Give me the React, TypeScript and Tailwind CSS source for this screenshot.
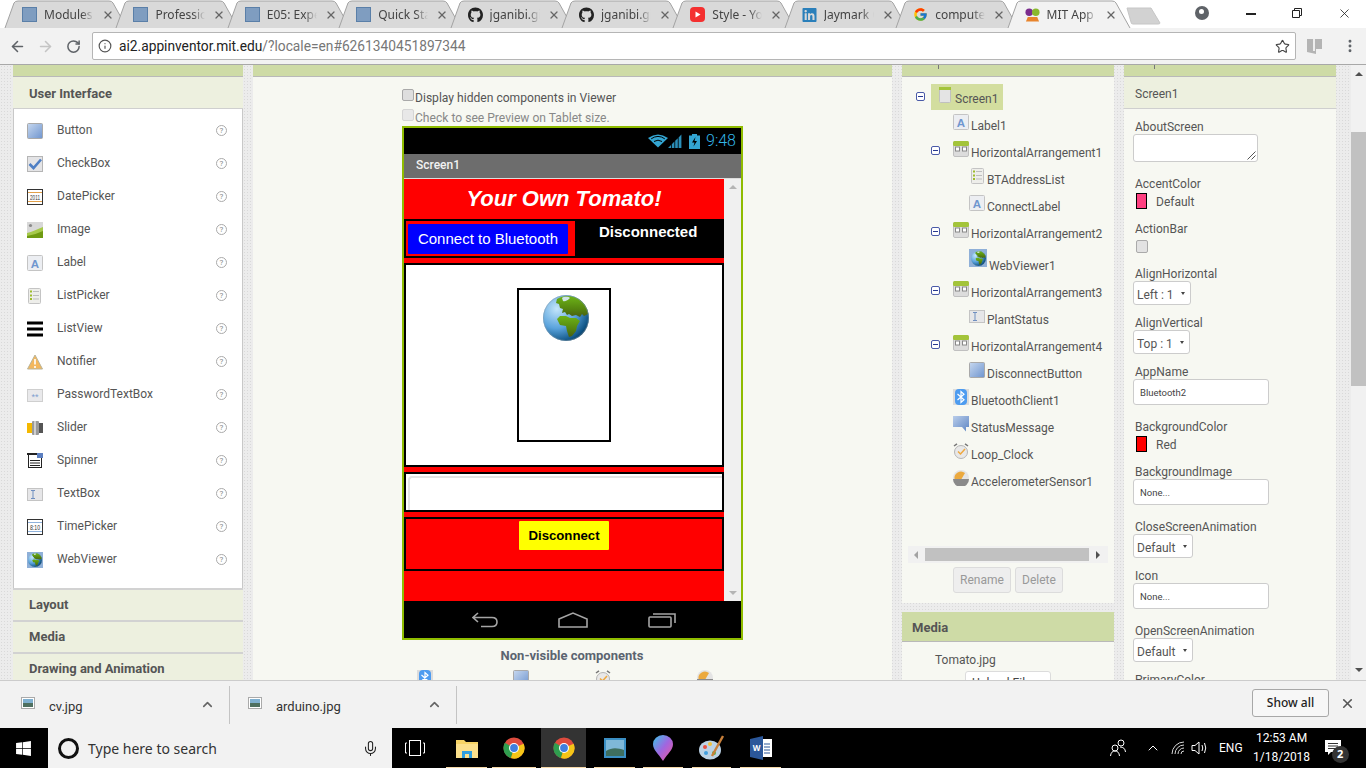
import { ArrowLeft, ArrowRight, ChevronUp, Info, Mic, MoreVertical, RotateCw, Star, X } from "lucide-react";
import { ReactNode } from "react";
import { FaGithub, FaLinkedin, FaWindows } from "react-icons/fa";
import { FcGoogle } from "react-icons/fc";

const ChromeLogo = () => (
  <svg width="22" height="22" viewBox="0 0 22 22">
    <circle cx="11" cy="11" r="10.5" fill="#dd4b3e" />
    <path d="M11 11 L1.9 5.7 A10.5 10.5 0 0 0 8 21.1 Z" fill="#2f9e4f" />
    <path d="M11 11 L20.6 6.7 A10.5 10.5 0 0 1 8 21.1 Z" fill="#f5c518" />
    <circle cx="11" cy="11" r="5" fill="#fff" />
    <circle cx="11" cy="11" r="3.9" fill="#3f7fe0" />
  </svg>
);

const Globe = ({ size }: { size: number }) => (
  <svg width={size} height={size} viewBox="0 0 46 46">
    <defs>
      <radialGradient id="sea" cx="30%" cy="30%" r="85%">
        <stop offset="0%" stopColor="#c4e6fb" />
        <stop offset="50%" stopColor="#5aa3dc" />
        <stop offset="85%" stopColor="#0f5485" />
        <stop offset="100%" stopColor="#04253d" />
      </radialGradient>
      <linearGradient id="land" x1="0" y1="0" x2="0" y2="1">
        <stop offset="0%" stopColor="#6db318" />
        <stop offset="60%" stopColor="#55860f" />
        <stop offset="100%" stopColor="#4a5f12" />
      </linearGradient>
    </defs>
    <circle cx="23" cy="23" r="23" fill="url(#sea)" />
    <path
      d="M14 4 C20 0 31 0 37 5 C42 9 45 14 45 19 L41 21 L39 19 L37 22 L33 20 L29 21 L26 19 L24 20 L22 17 L19 18 L20 14 L17 13 L16 9 L13 8 Z"
      fill="url(#land)"
    />
    <path
      d="M14 24 L17 21 L23 21 L27 23 L33 23 L37 26 L34 31 L33 36 L29 41 L26 42 L24 36 L23 31 L17 30 Z"
      fill="url(#land)"
    />
    <path d="M19 3 C22 1 26 2 27 3 C25 5 22 7 20 6 Z" fill="#cfe4e6" />
    <circle cx="23" cy="23" r="22.5" fill="none" stroke="#8a9aa5" strokeOpacity="0.5" />
  </svg>
);

const PaletteIcon = ({ name }: { name: string }) => {
  switch (name) {
    case "Button":
      return (
        <svg width="16" height="16" viewBox="0 0 16 16">
          <defs>
            <linearGradient id="btn" x1="0" y1="0" x2="1" y2="1">
              <stop offset="0%" stopColor="#c7d8ef" />
              <stop offset="100%" stopColor="#6f95cf" />
            </linearGradient>
          </defs>
          <rect x="0.5" y="0.5" width="15" height="15" rx="1" fill="url(#btn)" stroke="#a9a9a9" />
        </svg>
      );
    case "CheckBox":
      return (
        <svg width="16" height="16" viewBox="0 0 16 16">
          <rect x="0.5" y="0.5" width="15" height="15" fill="#e4e4e6" stroke="#b5b5b5" />
          <path d="M2.5 8 L6.5 12 L14 3.5" fill="none" stroke="#4f7fc4" strokeWidth="2.6" />
        </svg>
      );
    case "DatePicker":
      return (
        <svg width="16" height="16" viewBox="0 0 16 16">
          <rect x="0.5" y="0.5" width="15" height="15" fill="#fff" stroke="#333" />
          <path d="M1 3.5 H15 M1 12.5 H15" stroke="#e2a04a" />
          <text x="3" y="11" textLength="10" lengthAdjust="spacingAndGlyphs" fontSize="8" fontFamily="Liberation Sans" fill="#333">2011</text>
        </svg>
      );
    case "Image":
      return (
        <svg width="16" height="16" viewBox="0 0 16 16">
          <rect width="16" height="16" fill="#d8d8d8" />
          <circle cx="3.5" cy="3.5" r="1.6" fill="#8a8a8a" />
          <path d="M0 11 C5 10 10 7 16 5 V16 H0 Z" fill="#a6c94a" />
          <path d="M0 14 C6 13 11 11 16 9 V16 H0 Z" fill="#6f9a12" />
        </svg>
      );
    case "Label":
      return (
        <svg width="16" height="16" viewBox="0 0 16 16">
          <rect x="0.5" y="0.5" width="15" height="15" rx="1" fill="#eceef2" stroke="#c4c4c4" />
          <text x="8" y="12.5" textAnchor="middle" fontSize="11.5" fontWeight="700" fontFamily="Liberation Sans" fill="#6f96cf">A</text>
        </svg>
      );
    case "ListPicker":
      return (
        <svg width="14" height="16" viewBox="0 0 14 16">
          <rect x="0.5" y="0.5" width="12" height="15" rx="1" fill="#eeeeea" stroke="#c4c4c4" />
          <path d="M2 3.5 H4 M2 7.5 H4 M2 11 H4" stroke="#9dbb2c" strokeWidth="2" />
          <path d="M5 3.5 H11 M5 7.5 H11 M5 11 H11" stroke="#bdbdbd" />
        </svg>
      );
    case "ListView":
      return (
        <svg width="16" height="16" viewBox="0 0 16 16">
          <path d="M0 2 H16 M0 8 H16 M0 14 H16" stroke="#000" strokeWidth="3" />
        </svg>
      );
    case "Notifier":
      return (
        <svg width="16" height="16" viewBox="0 0 16 16">
          <path d="M8 1 L15.5 15 H0.5 Z" fill="#f3b75c" stroke="#b9b49a" />
          <path d="M8 5 V10.5 M8 12 V14" stroke="#fff" strokeWidth="1.6" />
        </svg>
      );
    case "PasswordTextBox":
      return (
        <svg width="16" height="16" viewBox="0 0 16 16">
          <rect x="0.5" y="2.5" width="15" height="12" fill="#e9e9eb" stroke="#cfcfcf" />
          <text x="8" y="13" textAnchor="middle" fontSize="9" fontFamily="Liberation Sans" fill="#7f9fd0">**</text>
        </svg>
      );
    case "Slider":
      return (
        <svg width="16" height="16" viewBox="0 0 16 16">
          <rect x="0" y="3" width="5" height="10" fill="#f4b800" />
          <rect x="5" y="1" width="7" height="14" rx="1" fill="#9a9a9a" />
          <rect x="7" y="1" width="2" height="14" fill="#cfcfcf" />
          <rect x="12" y="3" width="4" height="10" fill="#555" />
        </svg>
      );
    case "Spinner":
      return (
        <svg width="16" height="16" viewBox="0 0 16 16">
          <rect x="1.5" y="1" width="13" height="13.5" fill="#fff" stroke="#222" />
          <rect x="0" y="0" width="16" height="2" fill="#222" />
          <rect x="10" y="0" width="6" height="5" fill="#5c7fc0" />
          <path d="M3 7.5 H13 M3 10 H13 M3 12.5 H13" stroke="#222" />
        </svg>
      );
    case "TextBox":
      return (
        <svg width="16" height="16" viewBox="0 0 16 16">
          <rect x="0.5" y="2.5" width="15" height="12" fill="#e6e6e8" stroke="#c4c4c4" />
          <path d="M4 4.5 H8 M4 12.5 H8 M6 4.5 V12.5" stroke="#6f8fc0" />
        </svg>
      );
    case "TimePicker":
      return (
        <svg width="16" height="16" viewBox="0 0 16 16">
          <rect x="0.5" y="0.5" width="15" height="15" fill="#fff" stroke="#333" />
          <path d="M1 3.5 H15 M1 12.5 H15" stroke="#8fb2dc" />
          <text x="3" y="11" textLength="10" lengthAdjust="spacingAndGlyphs" fontSize="8" fontFamily="Liberation Sans" fill="#333">8:10</text>
        </svg>
      );
    case "WebViewer":
      return (
        <span className="flex h-4 w-4 items-center justify-center bg-[#8fb0d8]">
          <Globe size={14} />
        </span>
      );
    case "Arrangement":
      return (
        <svg width="16" height="16" viewBox="0 0 16 16">
          <rect x="0.5" y="0.5" width="15" height="15" rx="1.5" fill="#dcdcdc" stroke="#c0c0c0" />
          <rect x="0" y="0" width="16" height="5" rx="1.5" fill="#a3c43a" />
          <rect x="2.5" y="6" width="4" height="4" fill="#fff" stroke="#888" />
          <rect x="9.5" y="6" width="4" height="4" fill="#fff" stroke="#888" />
        </svg>
      );
    case "Bluetooth":
      return (
        <svg width="16" height="16" viewBox="0 0 16 16">
          <rect width="16" height="16" fill="#dcdcdc" />
          <rect x="2" y="0" width="12" height="16" rx="4" fill="#4d9cf0" />
          <path d="M4.5 5 L11 10.8 L8 13.5 V2.5 L11 5.2 L4.5 11" fill="none" stroke="#fff" strokeWidth="1.2" />
        </svg>
      );
    case "Message":
      return (
        <svg width="16" height="16" viewBox="0 0 16 16">
          <defs>
            <linearGradient id="msg" x1="0" y1="0" x2="1" y2="1">
              <stop offset="0%" stopColor="#b9cdea" />
              <stop offset="100%" stopColor="#5e86c4" />
            </linearGradient>
          </defs>
          <path d="M0 0 H16 V11 H13 V15.5 L9 11 H0 Z" fill="url(#msg)" />
        </svg>
      );
    case "Clock":
      return (
        <svg width="16" height="16" viewBox="0 0 16 16">
          <circle cx="8" cy="9" r="6.5" fill="#e8e8e8" stroke="#b5b5b5" />
          <path d="M1 3 L4 0.8 M15 3 L12 0.8" stroke="#777" strokeWidth="1.5" />
          <path d="M5 8.5 L7.5 11 L12 6" fill="none" stroke="#efa83e" strokeWidth="1.5" />
        </svg>
      );
    case "Gauge":
      return (
        <svg width="16" height="16" viewBox="0 0 16 16">
          <circle cx="8" cy="8" r="8" fill="#e4e4e4" />
          <path d="M1.5 9 A6.5 6.5 0 0 1 12 3 L8.5 9 Z" fill="#eba93e" />
          <path d="M0 9 H16 A8 8 0 0 1 0 9 Z" fill="#8a8a8a" />
        </svg>
      );
    default:
      return (
        <svg width="12" height="16" viewBox="0 0 12 16">
          <rect x="0.5" y="0.5" width="11" height="15" rx="1" fill="#e4e4e4" stroke="#c0c0c0" />
          <rect x="0" y="0" width="12" height="3" fill="#a3c43a" />
        </svg>
      );
  }
};

/**********************
 * Browser chrome
 */
function DocIcon() {
  return <span className="block h-[15px] w-[15px] border border-[#5a7fa8] bg-[#7f9dc0]" />;
}

const tabs: { title: string; icon: ReactNode }[] = [
  { title: "Modules", icon: <DocIcon /> },
  { title: "Professional", icon: <DocIcon /> },
  { title: "E05: Experience", icon: <DocIcon /> },
  { title: "Quick Start", icon: <DocIcon /> },
  { title: "jganibi.github", icon: <FaGithub size={16} color="#222" /> },
  { title: "jganibi.github", icon: <FaGithub size={16} color="#222" /> },
  {
    title: "Style - YouTube",
    icon: (
      <svg width="15" height="15" viewBox="0 0 15 15">
        <rect width="15" height="15" rx="4" fill="#f43030" />
        <path d="M5.5 4.5 L10.5 7.5 L5.5 10.5 Z" fill="#fff" />
      </svg>
    ),
  },
  { title: "Jaymark Oliver", icon: <FaLinkedin size={16} color="#2a7fba" /> },
  { title: "computer science", icon: <FcGoogle size={15} /> },
];

const Tab = ({ title, icon, active }: { title: string; icon: ReactNode; active?: boolean }) => (
  <div className="relative flex h-[28px] w-[111.4px] shrink-0 items-center pl-[15px] pt-[1px]">
    <svg className="absolute left-[-3px] top-0 h-[29px] w-[125px]" viewBox="0 0 125 29">
      <path
        d="M1 28 L10 3 Q11 1 14 1 H105 Q108 1 109 3 L123 28"
        fill={active ? "#f2f2f2" : "#d9d9d9"}
        stroke="#a3a3a3"
      />
    </svg>
    <span className="relative flex w-[15px] items-center justify-center">{icon}</span>
    <span className="relative ml-[7px] mt-[1px] w-[50px] overflow-hidden whitespace-nowrap text-[12px] text-[#444] [mask-image:linear-gradient(to_right,black_75%,transparent)]">
      {title}
    </span>
    <X className="relative ml-[8px]" size={12} strokeWidth={2.6} color="#666" />
  </div>
);

const TabStrip = () => (
  <div className="flex h-[28px] shrink-0 items-start bg-white pl-[7px]">
    {tabs.map((t, i) => (
      <Tab key={i} title={t.title} icon={t.icon} />
    ))}
    <Tab
      active
      title="MIT App Inventor"
      icon={
        <svg width="16" height="16" viewBox="0 0 16 16">
          <circle cx="4.5" cy="5" r="4" fill="#7b2d8e" />
          <circle cx="11.5" cy="5" r="4" fill="#8ab82e" />
          <path d="M3 10 H13 L15 15 H1 Z" fill="#e8842c" />
        </svg>
      }
    />
    <svg className="ml-[5px] mt-[7px]" width="36" height="18" viewBox="0 0 36 18">
      <path d="M1 1 H25 L34 16 Q34 17 32 17 H7 Q5 17 5 15 Z" fill="#d2d2d2" stroke="#c6c6c6" />
    </svg>
    <div className="ml-[33px] mt-[6px] flex h-[14px] w-[14px] items-center justify-center rounded-full bg-[#5f6368]">
      <span className="mb-[3px] block h-[5px] w-[5px] rounded-full bg-white" />
    </div>
    <div className="ml-[37px] mt-[13px] h-[1.5px] w-[10px] bg-[#222]" />
    <svg className="ml-[36px] mt-[8px]" width="10" height="10" viewBox="0 0 10 10">
      <path d="M0.5 2.5 H7.5 V9.5 H0.5 Z M2.5 2.5 V0.5 H9.5 V7.5 H7.5" fill="none" stroke="#222" />
    </svg>
    <X className="ml-[35px] mt-[6px]" size={15} strokeWidth={1.3} color="#222" />
  </div>
);

const Toolbar = () => (
  <div className="flex h-[37px] shrink-0 items-center border-b border-[#a8a8a8] bg-[#f2f2f2] pl-[9px]">
    <ArrowLeft size={17} strokeWidth={2.2} color="#5f6368" />
    <ArrowRight className="ml-[11px]" size={17} strokeWidth={2.2} color="#c4c4c4" />
    <RotateCw className="ml-[12px]" size={15} strokeWidth={2.4} color="#5f6368" />
    <div className="ml-[11px] flex h-[28px] w-[1204px] items-center rounded-[2px] border border-[#b5b5b5] bg-white pl-[5px]">
      <Info size={14} strokeWidth={2} color="#555" />
      <span className="ml-[7px] pt-[1px] font-[Roboto] text-[13.75px] text-[#222]">
        ai2.appinventor.mit.edu<span className="text-[#777]">/?locale=en#6261340451897344</span>
      </span>
      <Star className="ml-auto mr-[5px]" size={15} strokeWidth={1.8} color="#444" />
    </div>
    <svg className="ml-[11px]" width="15" height="17" viewBox="0 0 15 17">
      <path d="M0 1 H15 V11 H9 V16 L0 14 Z" fill="#b4b4b4" />
      <rect x="6" y="1" width="2" height="12" fill="#eee" />
    </svg>
    <MoreVertical className="ml-[20px]" size={16} strokeWidth={2.4} color="#5f6368" />
  </div>
);

/**********************
 * App Inventor panels
 */
const palette = [
  "Button",
  "CheckBox",
  "DatePicker",
  "Image",
  "Label",
  "ListPicker",
  "ListView",
  "Notifier",
  "PasswordTextBox",
  "Slider",
  "Spinner",
  "TextBox",
  "TimePicker",
  "WebViewer",
];

const PaletteColumn = () => (
  <div className="flex w-[230px] shrink-0 flex-col">
    <div className="h-[12px] shrink-0 border-b border-[#b9b9b9] bg-[#cedba6]" />
    <div className="flex h-[32px] shrink-0 items-center border-b border-[#cfcfcf] bg-[#edf0df] pl-[16px] pt-[3px] text-[13px] font-bold text-[#555]">
      User Interface
    </div>
    <div className="h-[479px] shrink-0 border-x border-[#c8c8c8] bg-white pt-[5px]">
      {palette.map((name) => (
        <div key={name} className="flex h-[33px] items-center pl-[13px] text-[12px] text-[#555]">
          <span className="flex w-[16px] justify-center">
            <PaletteIcon name={name} />
          </span>
          <span className="ml-[14px] mb-[1px]">{name}</span>
          <span className="ml-auto mr-[15px] flex h-[11px] w-[11px] items-center justify-center rounded-full border border-[#aaa] text-[8px] leading-none text-[#888]">
            ?
          </span>
        </div>
      ))}
    </div>
    {["Layout", "Media", "Drawing and Animation"].map((h) => (
      <div
        key={h}
        className="flex h-[32px] shrink-0 items-center border-t-2 border-[#d2d2d2] bg-[#edf0df] pl-[16px] text-[13px] font-bold text-[#555]"
      >
        {h}
      </div>
    ))}
  </div>
);

const ViewerColumn = () => (
  <div className="flex w-[639px] shrink-0 flex-col">
    <div className="h-[12px] shrink-0 border-b border-[#b9b9b9] bg-[#cedba6]" />
    <div className="grow bg-[#f7f8f2] pl-[149px] pt-[12px] text-[12.1px]">
      <div className="flex h-[20px] items-start text-[#555]">
        <span className="h-[12px] w-[12px] rounded-[2px] border border-[#a9a9a9] bg-[#dedede]" />
        <span className="ml-[1px] mt-[2px] leading-[14px]">Display hidden components in Viewer</span>
      </div>
      <div className="flex h-[17px] items-start text-[#888]">
        <span className="h-[12px] w-[12px] rounded-[2px] border border-[#d5d5d5] bg-[#e8e8e8]" />
        <span className="ml-[1px] mt-[2px] leading-[14px]">Check to see Preview on Tablet size.</span>
      </div>
      <Phone />
      <div className="mt-[9px] w-[340px] text-center text-[13px] font-bold leading-[14px] text-[#5b6470]">
        Non-visible components
      </div>
      <div className="mt-[7px] flex pl-[15px]">
        <PaletteIcon name="Bluetooth" />
        <span className="ml-[80px]">
          <PaletteIcon name="Button" />
        </span>
        <span className="ml-[66px]">
          <PaletteIcon name="Clock" />
        </span>
        <span className="ml-[86px]">
          <PaletteIcon name="Gauge" />
        </span>
      </div>
    </div>
  </div>
);

const Phone = () => (
  <div className="flex h-[514px] w-[341px] flex-col border-2 border-[#8fbc00] font-['Liberation_Sans',sans-serif]">
    {/* status bar */}
    <div className="flex h-[26px] shrink-0 items-center bg-black pl-[244px]">
      <svg width="20" height="14" viewBox="0 0 20 14">
        <path d="M10 13.5 L0 4 Q10 -3 20 4 Z" fill="#33a5d2" />
        <path d="M3.2 4.8 Q10 0 16.8 4.8 M6 7.5 Q10 4.8 14 7.5" fill="none" stroke="#000" />
      </svg>
      <svg width="14" height="14" viewBox="0 0 14 14">
        <path d="M0 14 L3 11 V14 Z M3.8 14 V10.2 L6.4 7.6 V14 Z M7.2 14 V6.8 L9.8 4.2 V14 Z M10.6 14 V3.4 L13.4 0.6 V14 Z" fill="#2b8fb8" />
      </svg>
      <svg className="ml-[7px]" width="11" height="15" viewBox="0 0 11 15">
        <rect x="3" y="0" width="5" height="2" fill="#33a5d2" />
        <rect x="0" y="1.5" width="11" height="13.5" fill="#33a5d2" />
        <path d="M6.5 3 L3 8.5 H5.5 L4.5 12.5 L8 7 H5.5 Z" fill="#000" />
      </svg>
      <span className="ml-[6px] font-[Roboto] text-[16px] font-light text-[#33b5e5]">9:48</span>
    </div>
    <div className="flex h-[24px] shrink-0 items-center bg-[#6d6d6d] pb-[2px] pl-[12px] font-[Roboto] text-[12px] font-medium text-[#f2f2f2]">
      Screen1
    </div>
    <div className="h-px shrink-0 bg-[#dcdcdc]" />
    <div className="flex h-[422px] shrink-0">
      <div className="w-[320px] shrink-0 bg-[#ff0000]">
        <div className="flex h-[40px] items-center justify-center pb-[2px] text-[22px] font-bold italic text-white">
          Your Own Tomato!
        </div>
        <div className="flex h-[39px] bg-black pl-[2px] pt-[2px]">
          <div className="h-[35px] w-[169px] bg-[#ff0000] px-[2px] py-[3px]">
            <div className="flex h-[30px] w-[160px] items-center justify-center rounded-[1px] bg-[#0000ff] pt-[1px] text-[15px] text-white">
              Connect to Bluetooth
            </div>
          </div>
          <span className="ml-[24px] mt-[2px] text-[15px] font-bold leading-[17px] text-white">Disconnected</span>
        </div>
        <div className="mt-[5px] flex h-[204px] justify-center border-2 border-black bg-white pt-[23px]">
          <div className="flex h-[154px] w-[94px] justify-center border-2 border-black pl-[4px] pt-[5px]">
            <Globe size={46} />
          </div>
        </div>
        <div className="mt-[5px] h-[40px] border-2 border-black bg-white pl-[2px] pt-[2px]">
          <div className="h-full rounded-tl-[4px] border-l-2 border-t-2 border-[#e3e3e3]" />
        </div>
        <div className="mt-[5px] flex h-[54px] justify-center border-2 border-black pt-[2px]">
          <div className="flex h-[29px] w-[90px] items-center justify-center rounded-[1px] bg-[#ffff00] text-[13.2px] font-bold text-black">
            Disconnect
          </div>
        </div>
      </div>
      <div className="flex w-[17px] flex-col items-center justify-between bg-[#f0f0f0] py-[6px]">
        <span className="h-0 w-0 border-x-[4px] border-b-[4px] border-x-transparent border-b-[#b5b5b5]" />
        <span className="h-0 w-0 border-x-[4px] border-t-[4px] border-x-transparent border-t-[#b5b5b5]" />
      </div>
    </div>
    <div className="flex grow items-center bg-black pl-[68px]">
      <svg width="26" height="16" viewBox="0 0 26 16">
        <path d="M6 1 L1 5.5 L6 10 M1 5.5 H20 Q25 5.5 25 10 Q25 14.5 20 14.5 H9" fill="none" stroke="#a5a5a5" strokeWidth="1.6" />
      </svg>
      <svg className="ml-[60px]" width="30" height="16" viewBox="0 0 30 16">
        <path d="M1 7 L15 1 L29 7 V15 H1 Z" fill="none" stroke="#a5a5a5" strokeWidth="1.6" />
      </svg>
      <svg className="ml-[60px]" width="28" height="16" viewBox="0 0 28 16">
        <rect x="1" y="5" width="22" height="10" rx="1" fill="none" stroke="#a5a5a5" strokeWidth="1.6" />
        <path d="M5 2 H27 V11" fill="none" stroke="#a5a5a5" strokeWidth="1.6" />
      </svg>
    </div>
  </div>
);

type TreeRow = {
  name: string;
  icon: string;
  pad: string;
  minus?: boolean;
  tall?: boolean;
};

const tree: TreeRow[] = [
  { name: "Label1", icon: "Label", pad: "pl-[51px]" },
  { name: "HorizontalArrangement1", icon: "Arrangement", pad: "pl-[29px]", minus: true },
  { name: "BTAddressList", icon: "ListPicker", pad: "pl-[69px]" },
  { name: "ConnectLabel", icon: "Label", pad: "pl-[67px]" },
  { name: "HorizontalArrangement2", icon: "Arrangement", pad: "pl-[29px]", minus: true },
  { name: "WebViewer1", icon: "WebViewer", pad: "pl-[67px]", tall: true },
  { name: "HorizontalArrangement3", icon: "Arrangement", pad: "pl-[29px]", minus: true },
  { name: "PlantStatus", icon: "TextBox", pad: "pl-[67px]" },
  { name: "HorizontalArrangement4", icon: "Arrangement", pad: "pl-[29px]", minus: true },
  { name: "DisconnectButton", icon: "Button", pad: "pl-[67px]" },
  { name: "BluetoothClient1", icon: "Bluetooth", pad: "pl-[51px]" },
  { name: "StatusMessage", icon: "Message", pad: "pl-[51px]" },
  { name: "Loop_Clock", icon: "Clock", pad: "pl-[51px]" },
  { name: "AccelerometerSensor1", icon: "Gauge", pad: "pl-[51px]" },
];

const MinusBox = () => (
  <span className="flex h-[9px] w-[9px] shrink-0 items-center justify-center rounded-[2px] border border-[#4a5aa8] bg-white">
    <span className="h-px w-[5px] bg-[#2a3a90]" />
  </span>
);

const ComponentsColumn = () => (
  <div className="flex w-[212px] shrink-0 flex-col">
    <div className="h-[12px] shrink-0 border-b border-[#b9b9b9] bg-[#cedba6] pl-[36px]">
      <div className="h-[4px] w-px bg-[#777]" />
    </div>
    <div className="h-[526px] shrink-0 bg-[#f7f8f2] pt-[7px] text-[12px] text-[#555]">
      <div className="flex h-[30px] items-start pl-[14px]">
        <span className="mt-[8px]">
          <MinusBox />
        </span>
        <div className="ml-[6px] flex h-[26px] w-[72px] items-start bg-[#d3de9f] pl-[8px] pt-[3px]">
          <PaletteIcon name="Screen" />
          <span className="ml-[4px] mt-[5px] leading-[14px]">Screen1</span>
        </div>
      </div>
      {tree.map((r) => (
        <div key={r.name} className={`flex items-start ${r.pad} ${r.tall ? "h-[32px]" : "h-[27px]"}`}>
          {r.minus && (
            <span className="mr-[13px] mt-[5px]">
              <MinusBox />
            </span>
          )}
          {r.icon === "WebViewer" ? (
            <span className="flex h-[18px] w-[18px] items-center justify-center bg-[#8fb0d8]">
              <Globe size={15} />
            </span>
          ) : (
            <PaletteIcon name={r.icon} />
          )}
          <span className={`ml-[2px] leading-[14px] ${r.tall ? "mt-[10px]" : "mt-[5px]"}`}>{r.name}</span>
        </div>
      ))}
      <div className="ml-[6px] mt-[49px] flex h-[17px] w-[200px] items-center bg-[#f1f1f1]">
        <span className="ml-[6px] h-0 w-0 border-y-[4px] border-r-[4px] border-y-transparent border-r-[#a3a3a3]" />
        <span className="ml-[7px] h-[13px] w-[164px] bg-[#c1c1c1]" />
        <span className="ml-[7px] h-0 w-0 border-y-[4px] border-l-[4px] border-y-transparent border-l-[#505050]" />
      </div>
      <div className="ml-[51px] mt-[4px] flex gap-[4px]">
        <div className="flex h-[26px] w-[58px] items-center justify-center rounded-[3px] border border-[#dcdcdc] bg-[#eeeeee] text-[#999]">
          Rename
        </div>
        <div className="flex h-[26px] w-[48px] items-center justify-center rounded-[3px] border border-[#dcdcdc] bg-[#eeeeee] text-[#999]">
          Delete
        </div>
      </div>
    </div>
    <div className="mt-[9px] flex h-[30px] shrink-0 items-center border-b border-[#b9b9b9] bg-[#cedba6] pl-[10px] pt-[2px] text-[13px] font-bold text-[#555]">
      Media
    </div>
    <div className="grow bg-[#f7f8f2] pl-[33px] pt-[11px] text-[12px] text-[#555]">
      <div className="leading-[14px]">Tomato.jpg</div>
      <div className="ml-[30px] mt-[4px] h-[30px] w-[86px] rounded-[3px] border border-[#dcdcdc] bg-white pt-[2px] text-center text-[#444]">
        Upload File ...
      </div>
    </div>
  </div>
);

const Prop = ({ label, mt, gap, children }: { label: string; mt: string; gap: string; children?: ReactNode }) => (
  <div className={mt}>
    <div className="h-[14px] leading-[16px]">{label}</div>
    <div className={gap}>{children}</div>
  </div>
);

const Swatch = ({ color, text }: { color: string; text: string }) => (
  <div className="ml-[3px] flex h-[16px] items-center">
    <span className={`h-[16px] w-[11px] border border-black ${color}`} />
    <span className="ml-[9px] pt-[2px]">{text}</span>
  </div>
);

const Select = ({ text, w, h = "h-[24px]" }: { text: string; w: string; h?: string }) => (
  <div className={`flex items-center rounded-[3px] border border-[#cccccc] bg-white pl-[3px] ${w} ${h}`}>
    <span className="pt-[3px]">{text}</span>
    <span className="ml-auto mr-[5px] h-0 w-0 border-x-[2.5px] border-t-[3px] border-x-transparent border-t-[#444]" />
  </div>
);

const FieldBox = ({ text }: { text: string }) => (
  <div className="flex h-[26px] w-[136px] items-center rounded-[3px] border border-[#cccccc] bg-white pl-[6px] pt-[2px] text-[9.5px] text-[#444]">
    {text}
  </div>
);

const PropertiesColumn = () => (
  <div className="flex w-[212px] shrink-0 flex-col">
    <div className="h-[12px] shrink-0 border-b border-[#b9b9b9] bg-[#cedba6] pl-[30px]">
      <div className="h-[4px] w-px bg-[#777]" />
    </div>
    <div className="flex h-[32px] shrink-0 items-center border-b border-[#cfcfcf] bg-[#edf0df] pl-[11px] pt-[2px] text-[12px] text-[#555]">
      Screen1
    </div>
    <div className="grow bg-[#f7f8f2] pl-[9px] pt-[10px] text-[12px] text-[#555]">
      <div className="pl-[2px]">
        <Prop label="AboutScreen" mt="" gap="mt-[1px] -ml-[2px]">
          <div className="relative h-[28px] w-[125px] rounded-[3px] border border-[#cccccc] bg-white">
            <svg className="absolute bottom-[1px] right-[1px]" width="9" height="9" viewBox="0 0 9 9">
              <path d="M8.5 0.5 L0.5 8.5 M8.5 4.5 L4.5 8.5" stroke="#555" />
            </svg>
          </div>
        </Prop>
        <Prop label="AccentColor" mt="mt-[14px]" gap="mt-[3px] -ml-[2px]">
          <Swatch color="bg-[#ff4081]" text="Default" />
        </Prop>
        <Prop label="ActionBar" mt="mt-[12px]" gap="mt-[5px] ml-[1px]">
          <div className="h-[13px] w-[12px] rounded-[2px] border border-[#aaaaaa] bg-[#e2e2e2]" />
        </Prop>
        <Prop label="AlignHorizontal" mt="mt-[13px]" gap="mt-[1px] -ml-[2px]">
          <Select text="Left : 1" w="w-[58px]" />
        </Prop>
        <Prop label="AlignVertical" mt="mt-[10px]" gap="mt-[1px] -ml-[2px]">
          <Select text="Top : 1" w="w-[57px]" />
        </Prop>
        <Prop label="AppName" mt="mt-[10px]" gap="mt-[1px] -ml-[2px]">
          <FieldBox text="Bluetooth2" />
        </Prop>
        <Prop label="BackgroundColor" mt="mt-[14px]" gap="mt-[3px] -ml-[2px]">
          <Swatch color="bg-[#ff0000]" text="Red" />
        </Prop>
        <Prop label="BackgroundImage" mt="mt-[12px]" gap="mt-[1px] -ml-[2px]">
          <FieldBox text="None..." />
        </Prop>
        <Prop label="CloseScreenAnimation" mt="mt-[14px]" gap="mt-[1px] -ml-[2px]">
          <Select text="Default" w="w-[60px]" />
        </Prop>
        <Prop label="Icon" mt="mt-[10px]" gap="mt-[1px] -ml-[2px]">
          <FieldBox text="None..." />
        </Prop>
        <Prop label="OpenScreenAnimation" mt="mt-[14px]" gap="mt-[1px] -ml-[2px]">
          <Select text="Default" w="w-[60px]" />
        </Prop>
        <Prop label="PrimaryColor" mt="mt-[10px]" gap="" />
      </div>
    </div>
  </div>
);

const PageScrollbar = () => (
  <div className="ml-[15px] flex w-[15px] shrink-0 flex-col items-center bg-[#f1f1f1] pt-[7px]">
    <span className="h-0 w-0 border-x-[4px] border-b-[4px] border-x-transparent border-b-[#505050]" />
    <span className="mt-[56px] h-[254px] w-full bg-[#c1c1c1]" />
    <span className="mt-[282px] h-0 w-0 border-x-[4px] border-t-[4px] border-x-transparent border-t-[#505050]" />
  </div>
);

/**********************
 * Downloads and taskbar
 */
const DownloadChip = ({ name, w }: { name: string; w: string }) => (
  <div className={`flex h-[38px] items-center border-r border-[#c4c4c4] ${w}`}>
    <svg className="mb-[4px]" width="14" height="12" viewBox="0 0 14 12">
      <rect x="0.5" y="0.5" width="13" height="11" fill="#fff" stroke="#aaa" />
      <rect x="2" y="2" width="10" height="4" fill="#7fb0d0" />
      <rect x="2" y="6" width="10" height="4" fill="#4f7060" />
    </svg>
    <span className="ml-[14px] mt-[4px] font-[Roboto] text-[13px] text-[#333]">{name}</span>
    <ChevronUp className="ml-auto mr-[14px]" size={15} strokeWidth={2.6} color="#666" />
  </div>
);

const TaskApp = ({ w, active, children }: { w: string; active?: boolean; children: ReactNode }) => (
  <div className={`flex h-full shrink-0 items-center justify-center border-b border-[#f6d9a9] ${w} ${active ? "bg-[#333333]" : ""}`}>
    {children}
  </div>
);

const DownloadBar = () => (
  <div className="flex h-[48px] shrink-0 items-center border-t border-[#cccccc] bg-[#f2f2f2]">
    <div className="pl-[21px]">
      <DownloadChip name="cv.jpg" w="w-[209px]" />
    </div>
    <div className="pl-[18px]">
      <DownloadChip name="arduino.jpg" w="w-[209px]" />
    </div>
    <div className="mb-[3px] ml-auto flex h-[28px] w-[77px] items-center justify-center rounded-[3px] border border-[#a8a8a8] bg-[#f7f7f7] font-['Noto_Sans',sans-serif] text-[12px] font-medium text-[#222]">
      Show all
    </div>
    <X className="mb-[3px] ml-[11px] mr-[11px]" size={15} strokeWidth={2.6} color="#555" />
  </div>
);

const Taskbar = () => (
  <div className="flex h-[40px] shrink-0 items-center bg-black font-['Noto_Sans',sans-serif] text-white">
    <div className="flex w-[48px] justify-center pr-[2px]">
      <FaWindows size={17} />
    </div>
    <div className="flex h-full w-[344px] items-center bg-[#f2f2f2] pl-[10px] text-[14px] text-[#333]">
      <span className="h-[21px] w-[21px] rounded-full border-[3px] border-[#111]" />
      <span className="ml-[9px]">Type here to search</span>
      <Mic className="ml-auto mr-[13px]" size={17} strokeWidth={1.5} color="#222" />
    </div>
    <svg className="ml-[13px] mr-[21px]" width="20" height="16" viewBox="0 0 20 16">
      <rect x="4.5" y="0.5" width="11" height="15" fill="none" stroke="#fff" />
      <path d="M2 3 H0.5 V13 H2 M18 3 H19.5 V13 H18" fill="none" stroke="#fff" />
    </svg>
    <TaskApp w="w-[41px]">
      <svg width="22" height="20" viewBox="0 0 22 20">
        <path d="M0 2 H8 L10 4 H22 V20 H0 Z" fill="#f6d365" />
        <rect x="0" y="6" width="22" height="14" fill="#fbe08c" />
        <path d="M6 13 H16 V20 H13 V16 H9 V20 H6 Z" fill="#2f9fe0" />
      </svg>
    </TaskApp>
    <div className="w-[5px] shrink-0" />
    <TaskApp w="w-[44px]">
      <ChromeLogo />
    </TaskApp>
    <div className="w-[5px] shrink-0" />
    <TaskApp w="w-[45px]" active>
      <ChromeLogo />
    </TaskApp>
    <div className="w-[8px] shrink-0" />
    <TaskApp w="w-[41px]">
      <svg width="22" height="20" viewBox="0 0 22 20">
        <rect x="1" y="1" width="20" height="18" fill="#7fb8d8" stroke="#3b8fc4" strokeWidth="2" />
        <path d="M2 13 C8 9 14 10 20 12 V18 H2 Z" fill="#3f6f5f" />
      </svg>
    </TaskApp>
    <div className="w-[8px] shrink-0" />
    <TaskApp w="w-[40px]">
      <svg width="22" height="26" viewBox="0 0 22 26">
        <defs>
          <linearGradient id="maps" x1="0" y1="0" x2="1" y2="1">
            <stop offset="0%" stopColor="#38c6e8" />
            <stop offset="50%" stopColor="#a066e0" />
            <stop offset="100%" stopColor="#f2589a" />
          </linearGradient>
        </defs>
        <path d="M11 26 C6 18 1 15 1 9 A10 9 0 0 1 21 9 C21 15 16 18 11 26 Z" fill="url(#maps)" />
      </svg>
    </TaskApp>
    <div className="w-[9px] shrink-0" />
    <TaskApp w="w-[39px]">
      <svg width="26" height="26" viewBox="0 0 26 26">
        <ellipse cx="11" cy="15" rx="11" ry="9.5" fill="#bcd3e6" />
        <circle cx="6" cy="12" r="2" fill="#e9503f" />
        <circle cx="11" cy="9" r="2" fill="#f3c23c" />
        <circle cx="7" cy="18" r="2" fill="#3f9fe0" />
        <circle cx="15" cy="18" r="2" fill="#58b04a" />
        <path d="M13 21 L24 1" stroke="#c9803a" strokeWidth="2.4" />
      </svg>
    </TaskApp>
    <div className="w-[9px] shrink-0" />
    <TaskApp w="w-[41px]">
      <svg width="22" height="24" viewBox="0 0 22 24">
        <rect x="8" y="3" width="14" height="18" fill="#fff" />
        <path d="M0 3 L13 0 V24 L0 21 Z" fill="#2b579a" />
        <path d="M14 8 H20 M14 11 H20 M14 14 H20 M14 17 H20" stroke="#2b579a" />
        <text x="6.5" y="15" textAnchor="middle" fontSize="8" fontWeight="700" fill="#fff">W</text>
      </svg>
    </TaskApp>
    <svg className="ml-[329px]" width="16" height="18" viewBox="0 0 16 18" fill="none" stroke="#fff">
      <circle cx="11" cy="4" r="3" />
      <circle cx="5" cy="9" r="3" />
      <path d="M0.5 17 Q1 12 5 12 Q9 12 9.5 17 M10 8 Q15 8 15.5 13" />
    </svg>
    <ChevronUp className="ml-[19px]" size={16} strokeWidth={1.5} />
    <svg className="ml-[10px]" width="14" height="14" viewBox="0 0 14 14" fill="none" stroke="#d8d8d8">
      <path d="M1 13 A12 12 0 0 1 13 1 M4 13 A9 9 0 0 1 13 4 M7 13 A6 6 0 0 1 13 7 M10 13 A3 3 0 0 1 13 10" />
    </svg>
    <svg className="ml-[6px]" width="16" height="16" viewBox="0 0 16 16" fill="none" stroke="#fff">
      <path d="M1 5.5 H4 L8 2 V14 L4 10.5 H1 Z M11 5 Q12.5 8 11 11 M13.5 3 Q16 8 13.5 13" />
    </svg>
    <span className="ml-[12px] font-[Roboto] text-[12px]">ENG</span>
    <div className="ml-[8px] flex w-[62px] flex-col items-center font-[Roboto] text-[12px] leading-[19px]">
      <span>12:53 AM</span>
      <span>1/18/2018</span>
    </div>
    <div className="relative ml-[12px]">
      <svg width="16" height="16" viewBox="0 0 16 16">
        <path d="M0 0 H16 V12 H6 L3 15 V12 H0 Z" fill="#fff" />
        <path d="M3 3.5 H13 M3 6 H13 M3 8.5 H10" stroke="#333" />
      </svg>
      <span className="absolute left-[7px] top-[6px] flex h-[17px] w-[17px] items-center justify-center rounded-full bg-[#333] text-[11px] font-bold">
        2
      </span>
    </div>
  </div>
);

export default function App() {
  return (
    <div className="flex h-[768px] w-[1366px] flex-col overflow-hidden font-[Roboto]">
      <div className="font-['Noto_Sans',sans-serif]">
        <TabStrip />
      </div>
      <Toolbar />
      <div className="flex h-[615px] shrink-0 overflow-hidden bg-[#ececec] bg-[radial-gradient(#d9d9d9_1px,transparent_1px)] bg-[length:3px_3px] pl-[13px]">
        <PaletteColumn />
        <div className="w-[10px] shrink-0" />
        <ViewerColumn />
        <div className="w-[10px] shrink-0" />
        <ComponentsColumn />
        <div className="w-[10px] shrink-0" />
        <PropertiesColumn />
        <PageScrollbar />
      </div>
      <DownloadBar />
      <Taskbar />
    </div>
  );
}
